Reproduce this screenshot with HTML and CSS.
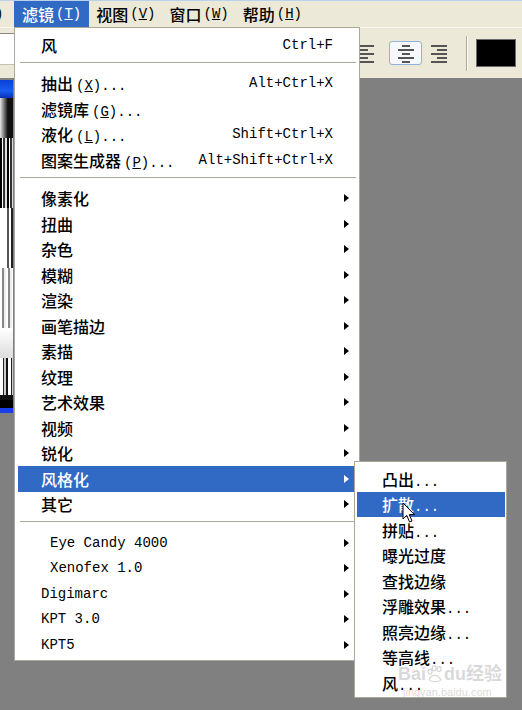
FILE: index.html
```html
<!DOCTYPE html>
<html lang="zh-CN">

<head>
    <meta charset="UTF-8">
    <meta name="viewport" content="width=device-width, initial-scale=1.0">
    <title>滤镜菜单</title>
    <link rel="stylesheet" href="styles.css">
</head>

<body>
    <!-- barre de menus -->
    <div class="menubar">
        <div class="mb-item cut"><span class="en">)</span></div>
        <div class="mb-item open">滤镜<span class="en acc">(<u>T</u>)</span></div>
        <div class="mb-item">视图<span class="en acc">(<u>V</u>)</span></div>
        <div class="mb-item">窗口<span class="en acc">(<u>W</u>)</span></div>
        <div class="mb-item">帮助<span class="en acc">(<u>H</u>)</span></div>
    </div>

    <div class="toolbar">
        <div class="field"></div>
        <div class="tools">
            <svg class="ico" width="20" height="20" viewBox="0 0 20 20">
                <g stroke="#555" stroke-width="2">
                    <line x1="2" y1="3" x2="18" y2="3" />
                    <line x1="2" y1="7" x2="12" y2="7" />
                    <line x1="2" y1="11" x2="18" y2="11" />
                    <line x1="2" y1="15" x2="12" y2="15" />
                    <line x1="2" y1="19" x2="18" y2="19" />
                </g>
            </svg>
            <div class="btn-on">
                <svg width="20" height="20" viewBox="0 0 20 20">
                    <g stroke="#555" stroke-width="2">
                        <line x1="6" y1="3" x2="14" y2="3" />
                        <line x1="2" y1="7" x2="18" y2="7" />
                        <line x1="6" y1="11" x2="14" y2="11" />
                        <line x1="2" y1="15" x2="18" y2="15" />
                        <line x1="6" y1="19" x2="14" y2="19" />
                    </g>
                </svg>
            </div>
            <svg class="ico" width="20" height="20" viewBox="0 0 20 20">
                <g stroke="#555" stroke-width="2">
                    <line x1="2" y1="3" x2="18" y2="3" />
                    <line x1="8" y1="7" x2="18" y2="7" />
                    <line x1="2" y1="11" x2="18" y2="11" />
                    <line x1="8" y1="15" x2="18" y2="15" />
                    <line x1="2" y1="19" x2="18" y2="19" />
                </g>
            </svg>
            <div class="tsep"></div>
            <div class="swatch"></div>
        </div>
    </div>

    <div class="workspace">
        <div class="doc">
            <div class="doc-title"></div>
            <div class="doc-img"></div>
            <div class="doc-foot"></div>
            <div class="doc-bar"></div>
        </div>
    </div>

    <!-- menu Filtre -->
    <ul class="menu main">
        <li class="item"><span class="label">风</span><span class="en key">Ctrl+F</span></li>
        <li class="sep"></li>
        <li class="item"><span class="label">抽出<span class="en acc">(<u>X</u>)...</span></span><span class="en key">Alt+Ctrl+X</span></li>
        <li class="item"><span class="label">滤镜库<span class="en acc">(<u>G</u>)...</span></span></li>
        <li class="item"><span class="label">液化<span class="en acc">(<u>L</u>)...</span></span><span class="en key">Shift+Ctrl+X</span></li>
        <li class="item"><span class="label">图案生成器<span class="en acc">(<u>P</u>)...</span></span><span class="en key">Alt+Shift+Ctrl+X</span></li>
        <li class="sep"></li>
        <li class="item sub"><span class="label">像素化</span><span class="arrow"></span></li>
        <li class="item sub"><span class="label">扭曲</span><span class="arrow"></span></li>
        <li class="item sub"><span class="label">杂色</span><span class="arrow"></span></li>
        <li class="item sub"><span class="label">模糊</span><span class="arrow"></span></li>
        <li class="item sub"><span class="label">渲染</span><span class="arrow"></span></li>
        <li class="item sub"><span class="label">画笔描边</span><span class="arrow"></span></li>
        <li class="item sub"><span class="label">素描</span><span class="arrow"></span></li>
        <li class="item sub"><span class="label">纹理</span><span class="arrow"></span></li>
        <li class="item sub"><span class="label">艺术效果</span><span class="arrow"></span></li>
        <li class="item sub"><span class="label">视频</span><span class="arrow"></span></li>
        <li class="item sub"><span class="label">锐化</span><span class="arrow"></span></li>
        <li class="item sub active"><span class="label">风格化</span><span class="arrow"></span></li>
        <li class="item sub"><span class="label">其它</span><span class="arrow"></span></li>
        <li class="sep"></li>
        <li class="item sub indent"><span class="label en">Eye Candy 4000</span><span class="arrow"></span></li>
        <li class="item sub indent"><span class="label en">Xenofex 1.0</span><span class="arrow"></span></li>
        <li class="item sub"><span class="label en">Digimarc</span><span class="arrow"></span></li>
        <li class="item sub"><span class="label en">KPT 3.0</span><span class="arrow"></span></li>
        <li class="item sub"><span class="label en">KPT5</span><span class="arrow"></span></li>
    </ul>

    <!-- sous-menu Stylize -->
    <ul class="menu submenu">
        <li class="item"><span class="label">凸出<span class="en">...</span></span></li>
        <li class="item active"><span class="label">扩散<span class="en">...</span></span></li>
        <li class="item"><span class="label">拼贴<span class="en">...</span></span></li>
        <li class="item"><span class="label">曝光过度</span></li>
        <li class="item"><span class="label">查找边缘</span></li>
        <li class="item"><span class="label">浮雕效果<span class="en">...</span></span></li>
        <li class="item"><span class="label">照亮边缘<span class="en">...</span></span></li>
        <li class="item"><span class="label">等高线<span class="en">...</span></span></li>
        <li class="item"><span class="label">风<span class="en">...</span></span></li>
    </ul>

    <div class="watermark">
        <div class="wm-logo">Bai<svg width="18" height="18" viewBox="0 0 22 22">
                <g fill="none" stroke="#bbb" stroke-width="1.5">
                    <ellipse cx="5" cy="8" rx="2.5" ry="3" />
                    <ellipse cx="10" cy="4" rx="2.5" ry="3" />
                    <ellipse cx="16" cy="5" rx="2.5" ry="3" />
                    <path d="M4 18 C6 11 15 11 18 18 C16 21 6 21 4 18 Z" />
                </g>
            </svg>du经验</div>
        <div class="wm-url">jingyan.baidu.com</div>
    </div>

    <svg class="cursor" width="14" height="22" viewBox="0 0 14 22">
        <path d="M1 1 L1 17 L4.8 13.4 L7.6 20 L10 19 L7.3 12.6 L12.5 12.6 Z" fill="#fff" stroke="#000" stroke-width="1" />
    </svg>
</body>

</html>
```

FILE: styles.css
```css
body {
    margin: 0;
    width: 522px;
    height: 710px;
    overflow: hidden;
    position: relative;
    background: #808080;
    font-family: "Noto Sans CJK SC", sans-serif;
    font-size: 16px;
    font-weight: 500;
    color: #000;
}

.en {
    font-family: "Liberation Mono", monospace;
    font-size: 14px;
    font-weight: normal;
}

.acc {
    margin-left: 3px;
}

/* menu bar */
.menubar {
    display: flex;
    height: 26px;
    border-top: 1px solid #b9d1ea;
    background: #ece9d8;
}

.mb-item {
    display: flex;
    align-items: center;
    padding: 0 7px;
    line-height: 26px;
}

.mb-item .acc {
    margin-left: 2px;
}

.mb-item.cut {
    width: 14px;
    padding: 0;
    box-sizing: border-box;
}

.mb-item.cut .en {
    margin-left: -5px;
}

.mb-item.open {
    padding: 0 8px;
    background: #316ac5;
    color: #fff;
}

/* options bar */
.toolbar {
    display: flex;
    align-items: center;
    height: 50px;
    border-top: 1px solid #f7f6ef;
    background: #ece9d8;
}

.field {
    align-self: flex-start;
    margin-top: 5px;
    width: 14px;
    height: 30px;
    background: #fff;
    border-top: 1px solid #8a8a80;
    border-bottom: 1px solid #c5c2b2;
}

.tools {
    display: flex;
    align-items: center;
    margin-left: auto;
    margin-right: 6px;
}

.ico {
    display: block;
}

.tools .ico:first-child {
    margin-right: 13px;
}

.btn-on {
    display: flex;
    align-items: center;
    justify-content: center;
    width: 31px;
    height: 22px;
    border: 1px solid #8fb3dd;
    border-radius: 3px;
    background: #f6f8fb;
    margin-right: 7px;
}

.tsep {
    width: 1px;
    height: 35px;
    background: #aca899;
    border-right: 1px solid #fff;
    margin: 0 8px 0 17px;
}

.swatch {
    width: 38px;
    height: 26px;
    background: #000;
    border: 1px solid #6a6a6a;
}

/* document window at the left */
.workspace {
    display: flex;
    padding-top: 2px;
}

.doc {
    display: flex;
    flex-direction: column;
    width: 13px;
    height: 333px;
}

.doc-title {
    height: 18px;
    background: linear-gradient(#0b3fd8, #1a5cf0 60%, #0a2fb5);
}

.doc-img {
    flex: 1;
    background:
        linear-gradient(90deg, rgba(255, 255, 255, 0.9), rgba(255, 255, 255, 0) 60%) 0 0 / 100% 40px no-repeat,
        repeating-linear-gradient(90deg, #000 0 2px, #fff 2px 3px, #333 3px 5px, #ddd 5px 7px) 0 40px / 100% 70px no-repeat,
        linear-gradient(90deg, #fff 0 7px, #555 7px 9px, #fff 9px 11px, #222 11px) 0 110px / 100% 60px no-repeat,
        repeating-linear-gradient(90deg, #fff 0 2px, #888 2px 4px, #eee 4px 6px) 0 170px / 100% 60px no-repeat,
        linear-gradient(#fff, #ddd) 0 230px / 100% 30px no-repeat,
        repeating-linear-gradient(90deg, #fff 0 3px, #222 3px 4px, #ccc 4px 6px, #111 6px 8px) 0 260px / 100% 37px no-repeat,
        #111;
}

.doc-foot {
    height: 8px;
    background: #000;
}

.doc-bar {
    height: 5px;
    background: #1a3fe8;
}

/* menus */
.menu {
    position: absolute;
    margin: 0;
    list-style: none;
    box-sizing: border-box;
    background: #fff;
    border: 1px solid #aca899;
}

.menu.main {
    left: 14px;
    top: 27px;
    width: 346px;
    padding: 4px 0 2.5px;
}

.menu.submenu {
    left: 354px;
    top: 461px;
    width: 153px;
    height: 237px;
    padding: 4px 0 0;
}

.item {
    display: flex;
    align-items: center;
    height: 25.5px;
    margin: 0 0 0 3px;
    padding: 0 10px 0 23px;
    white-space: nowrap;
}

.item .label {
    flex: 1;
}

.item .key {
    margin-right: 16px;
}

.item.indent {
    padding-left: 32px;
}

.item.active {
    background: #316ac5;
    color: #fff;
}

.arrow {
    width: 0;
    height: 0;
    border-top: 4.5px solid transparent;
    border-bottom: 4.5px solid transparent;
    border-left: 5px solid #000;
}

.item.active .arrow {
    border-left-color: #fff;
}

.submenu .item {
    margin: 0 1px 0 2px;
    padding-left: 25px;
}

.sep {
    height: 13px;
    box-sizing: border-box;
    padding-top: 4px;
    margin: 0 3px 0 5px;
}

.sep::before {
    content: "";
    display: block;
    border-top: 1px solid #aca899;
}

/* overlays */
.watermark {
    position: absolute;
    left: 398px;
    top: 662px;
    white-space: nowrap;
    color: rgba(170, 170, 170, 0.45);
    font-family: "Liberation Sans", "Noto Sans CJK SC", sans-serif;
    font-weight: bold;
}

.wm-logo {
    display: flex;
    align-items: center;
    font-size: 18px;
    line-height: 24px;
}

.wm-logo svg {
    opacity: 0.6;
}

.wm-url {
    font-size: 11px;
    line-height: 12px;
    font-weight: normal;
    margin-left: 5px;
}

.cursor {
    position: absolute;
    left: 402px;
    top: 502px;
}
```
